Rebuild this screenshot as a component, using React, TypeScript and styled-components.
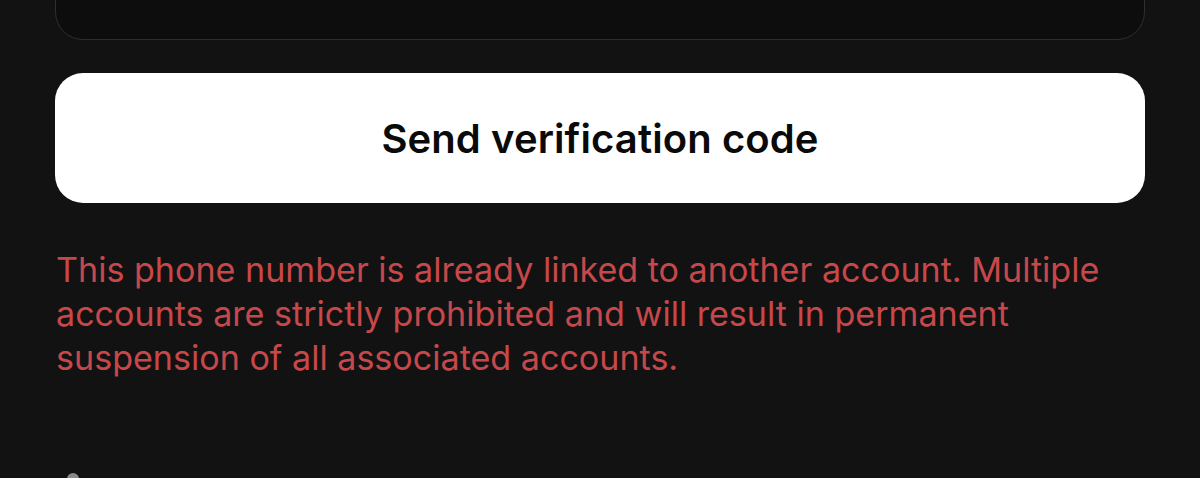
import React from 'react';
import styled, { createGlobalStyle } from 'styled-components';

const GlobalStyle = createGlobalStyle`
  html, body {
    margin: 0;
    padding: 0;
    background: #121212;
  }
  body {
    font-family: Inter, "Liberation Sans", Arial, sans-serif;
    -webkit-font-smoothing: antialiased;
  }
`;

const Page = styled.div`
  width: 1200px;
  height: 478px;
  overflow: hidden;
  box-sizing: border-box;
  padding: 0 55px;
  display: flex;
  flex-direction: column;
  background: #121212;
`;

const PhoneField = styled.div`
  height: 110px;
  margin-top: -70px;
  box-sizing: border-box;
  border: 1px solid #2f2f2f;
  border-radius: 28px;
  background: #0d0d0d;
  flex-shrink: 0;
`;

const PrimaryButton = styled.button`
  margin-top: 33px;
  height: 130px;
  width: 100%;
  border: none;
  border-radius: 28px;
  background: #ffffff;
  color: #0a0a0a;
  font-family: Inter, "Liberation Sans", Arial, sans-serif;
  font-weight: 600;
  font-size: 40px;
  letter-spacing: 0.1px;
  cursor: pointer;
  flex-shrink: 0;
`;

const ErrorText = styled.p`
  margin: 45px 0 0 1px;
  font-size: 34.1px;
  line-height: 44px;
  color: #c6484a;
  max-width: 1075px;
`;

const FooterRow = styled.div`
  margin-top: 93px;
  padding-left: 12px;
  display: flex;
  align-items: center;
`;

const Dot = styled.span`
  width: 12px;
  height: 12px;
  border-radius: 50%;
  background: #8a8a8a;
`;

export default function App() {
  return (
    <>
      <GlobalStyle />
      <Page>
        <PhoneField />
        <PrimaryButton type="button">Send verification code</PrimaryButton>
        <ErrorText>
          This phone number is already linked to another account. Multiple
          accounts are strictly prohibited and will result in permanent
          suspension of all associated accounts.
        </ErrorText>
        <FooterRow>
          <Dot />
        </FooterRow>
      </Page>
    </>
  );
}
